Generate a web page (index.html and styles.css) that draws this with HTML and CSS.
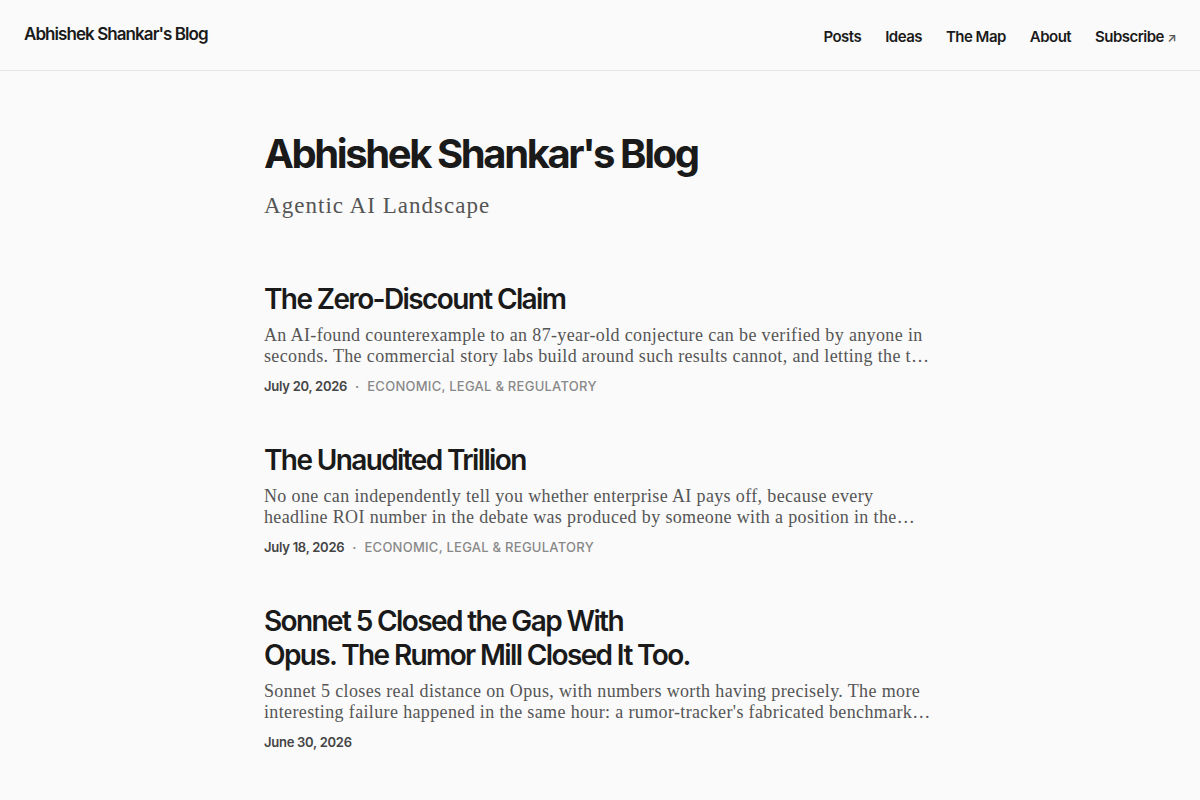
FILE: index.html
```html
<!DOCTYPE html>
<html lang="en">
<head>
    <meta charset="UTF-8">
    <meta name="viewport" content="width=device-width, initial-scale=1.0">
    <title>Abhishek Shankar's Blog</title>
    <link rel="stylesheet" href="styles.css">
</head>
<body>
    <!-- Site header -->
    <header class="site-header">
        <a href="#" class="site-name">Abhishek Shankar's Blog</a>
        <nav class="site-nav">
            <a href="#">Posts</a>
            <a href="#">Ideas</a>
            <a href="#">The Map</a>
            <a href="#">About</a>
            <a href="#">Subscribe <span class="ext">&#8599;</span></a>
        </nav>
    </header>

    <main class="content">
        <div class="intro">
            <h1>Abhishek Shankar's Blog</h1>
            <p class="tagline">Agentic AI Landscape</p>
        </div>

        <!-- Post list -->
        <article class="post">
            <h2><a href="#">The Zero-Discount Claim</a></h2>
            <p class="excerpt">An AI-found counterexample to an 87-year-old conjecture can be verified by anyone in seconds. The commercial story labs build around such results cannot, and letting the two blur is the mistake.</p>
            <div class="meta">
                <span class="date">July 20, 2026</span>
                <span class="sep">&middot;</span>
                <span class="tags">Economic, Legal &amp; Regulatory</span>
            </div>
        </article>

        <article class="post">
            <h2><a href="#">The Unaudited Trillion</a></h2>
            <p class="excerpt">No one can independently tell you whether enterprise AI pays off, because every headline ROI number in the debate was produced by someone with a position in the outcome.</p>
            <div class="meta">
                <span class="date">July 18, 2026</span>
                <span class="sep">&middot;</span>
                <span class="tags">Economic, Legal &amp; Regulatory</span>
            </div>
        </article>

        <article class="post">
            <h2><a href="#">Sonnet 5 Closed the Gap With Opus. The Rumor Mill Closed It Too.</a></h2>
            <p class="excerpt">Sonnet 5 closes real distance on Opus, with numbers worth having precisely. The more interesting failure happened in the same hour: a rumor-tracker's fabricated benchmark table.</p>
            <div class="meta">
                <span class="date">June 30, 2026</span>
            </div>
        </article>
    </main>
</body>
</html>
```

FILE: styles.css
```css
* { margin: 0; padding: 0; box-sizing: border-box; }
body { font-family: Inter, "Noto Sans", sans-serif; background-color: #fafafa; color: #1a1a1a; }
a { color: inherit; text-decoration: none; }

/* Header */
.site-header { height: 71px; display: flex; justify-content: space-between; align-items: center; padding: 0 24px; border-bottom: 1px solid #e4e4e4; }
.site-name { font-size: 17px; font-weight: 600; letter-spacing: -0.055em; margin-top: -2px; }
.site-nav { display: flex; gap: 24px; font-size: 15px; font-weight: 600; letter-spacing: -0.035em; margin-top: 2px; }
.site-nav .ext { font-size: 12px; color: #555; }

/* Content */
.content { max-width: 672px; margin: 0 auto; padding: 61px 0 40px; }
.intro h1 { font-size: 40px; font-weight: 700; line-height: 44px; letter-spacing: -0.06em; }
.tagline { font-family: "Liberation Serif", "DejaVu Serif", serif; font-size: 23px; line-height: 30px; color: #555; margin-top: 15px; letter-spacing: 0.045em; }

.intro { margin-bottom: 61px; }
.post { margin-bottom: 48px; }
.post h2 { font-size: 28px; font-weight: 600; line-height: 34px; letter-spacing: -0.058em; text-wrap: balance; }
.excerpt { font-family: "Liberation Serif", "DejaVu Serif", serif; font-size: 18px; line-height: 21px; color: #555; margin-top: 9px; letter-spacing: 0.02em; display: -webkit-box; -webkit-line-clamp: 2; -webkit-box-orient: vertical; overflow: hidden; }
.meta { margin-top: 10px; font-size: 13px; line-height: 18px; font-weight: 600; display: flex; gap: 8px; }
.date { color: #444; letter-spacing: -0.02em; }
.sep { color: #888; }
.tags { color: #888; font-weight: 500; text-transform: uppercase; letter-spacing: 0.02em; }
```
